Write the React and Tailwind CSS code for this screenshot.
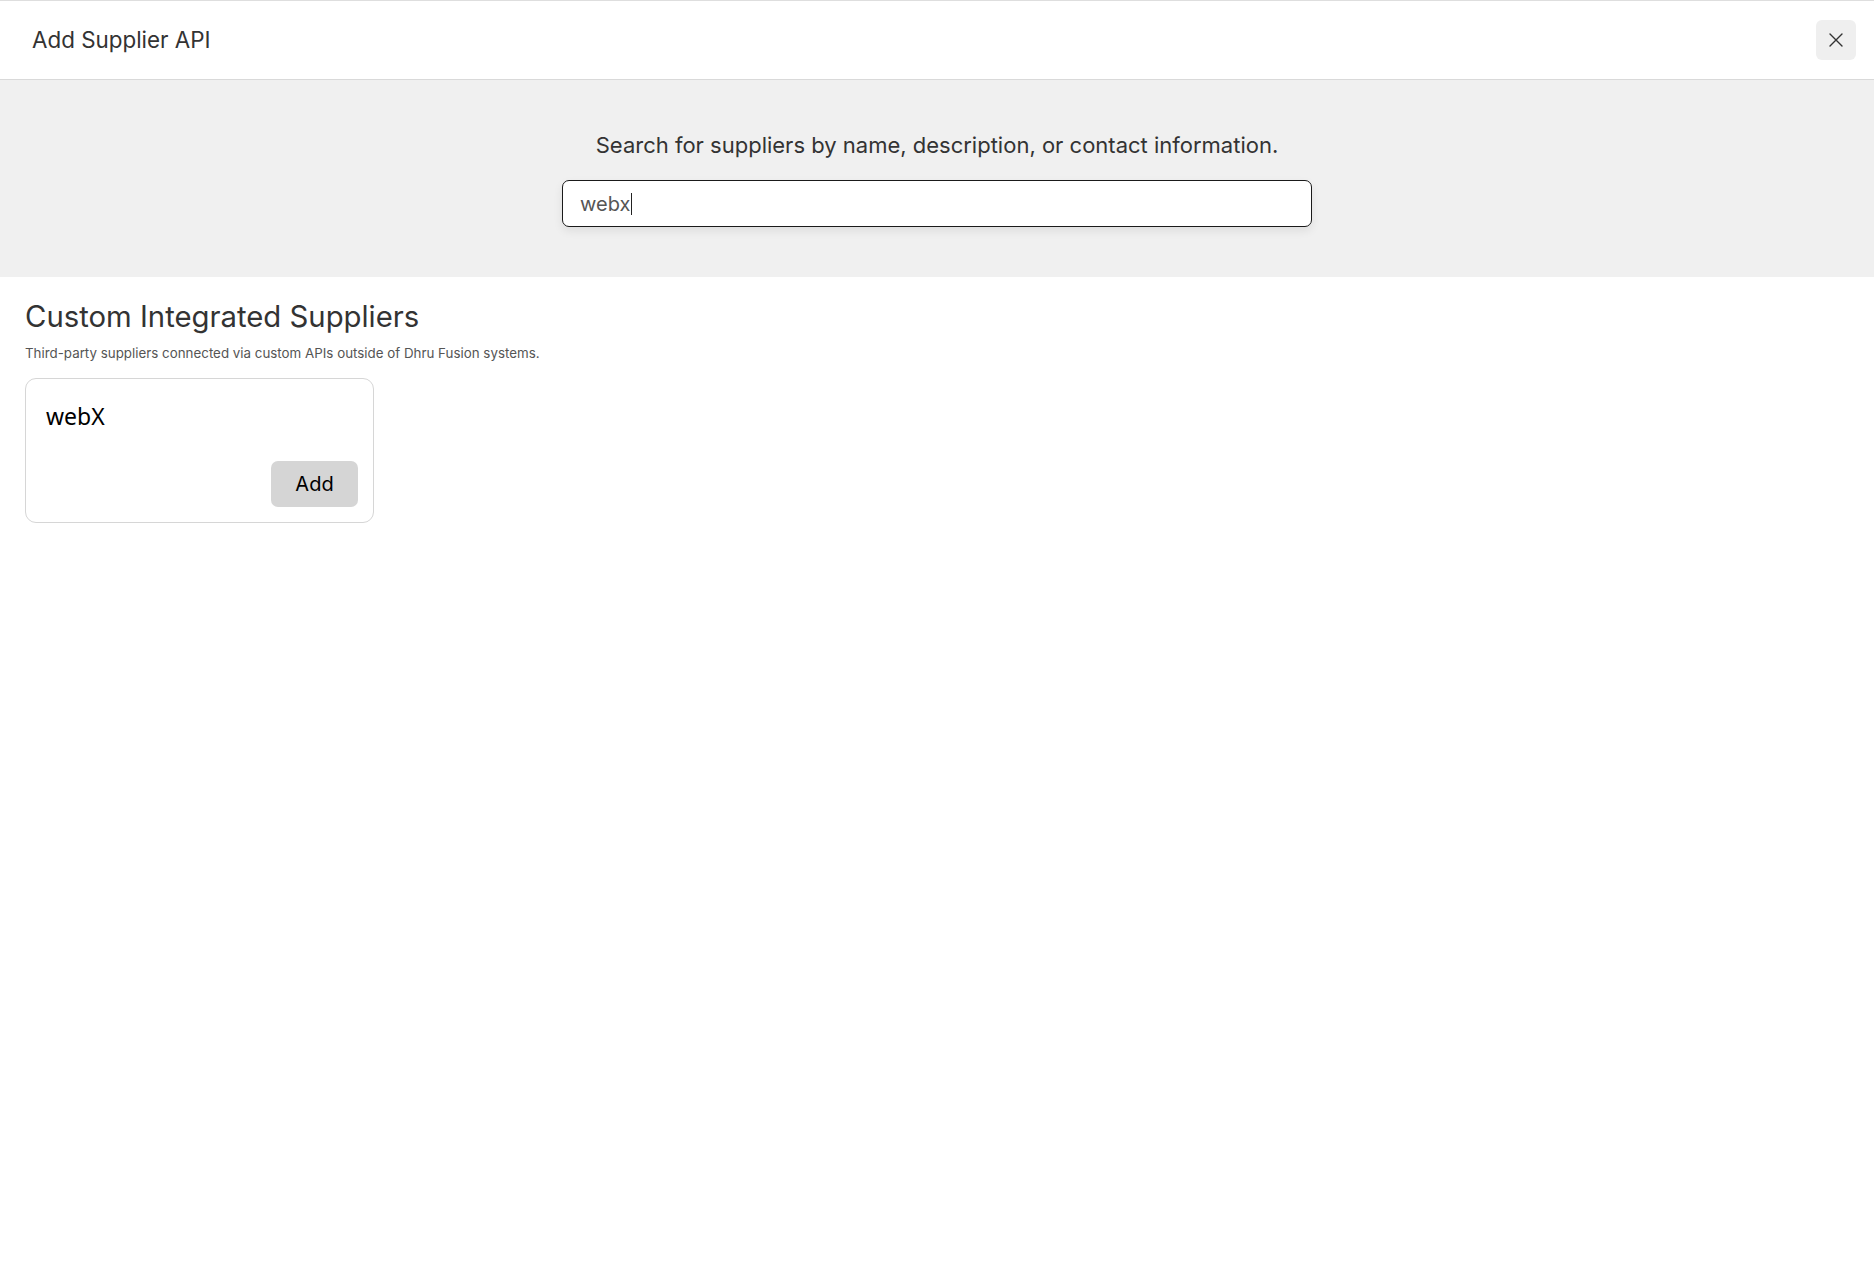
import React from "react";

export default function App() {
  const font = { fontFamily: "Inter, 'Noto Sans', sans-serif" };
  return (
    <div className="min-h-[1279px] w-full bg-white border-t border-[#dedede]" style={font}>
      <div className="flex h-[79px] items-center justify-between border-b border-[#d9d9d9] pl-[32px] pr-[18px]">
        <h1 className="text-[22.4px] leading-none text-[#333]">Add Supplier API</h1>
        <button className="flex h-[40px] w-[40px] items-center justify-center rounded-[6px] bg-[#efefef] text-[#333]">
          <svg width="14" height="14" viewBox="0 0 14 14" fill="none" stroke="currentColor" strokeWidth="1.4" strokeLinecap="round">
            <path d="M1 1L13 13M13 1L1 13" />
          </svg>
        </button>
      </div>

      <div className="flex flex-col items-center bg-[#f0f0f0] pt-[49px] pb-[50px]">
        <p className="text-[22px] leading-[32px] text-[#333]">
          Search for suppliers by name, description, or contact information.
        </p>
        <div className="mt-[19px] flex h-[47px] w-[750px] items-center rounded-[7px] border border-[#1a1a1a] bg-white px-[17px] shadow-[0_4px_10px_rgba(0,0,0,0.08)]">
          <span className="text-[20px] text-[#555]">webx</span>
          <span className="ml-[1px] h-[22px] w-[1px] bg-[#222]" />
        </div>
      </div>

      <div className="px-[25px] pt-[22px]">
        <h2 className="text-[29.3px] leading-[36px] text-[#333]">Custom Integrated Suppliers</h2>
        <p className="mt-[9px] text-[13.35px] leading-[18px] text-[#555]">
          Third-party suppliers connected via custom APIs outside of Dhru Fusion systems.
        </p>
        <div className="mt-[16px] flex h-[145px] w-[349px] flex-col justify-between rounded-[11px] border border-[#d6d6d6] pl-[20px] pr-[15px] pt-[23px] pb-[15px]">
          <div className="text-[23px] leading-[28px] text-black" style={{ fontFamily: "'Noto Sans', sans-serif" }}>webX</div>
          <div className="flex justify-end">
            <button className="h-[46px] w-[87px] rounded-[7px] bg-[#d5d5d5] text-[20px] text-black">Add</button>
          </div>
        </div>
      </div>
    </div>
  );
}
